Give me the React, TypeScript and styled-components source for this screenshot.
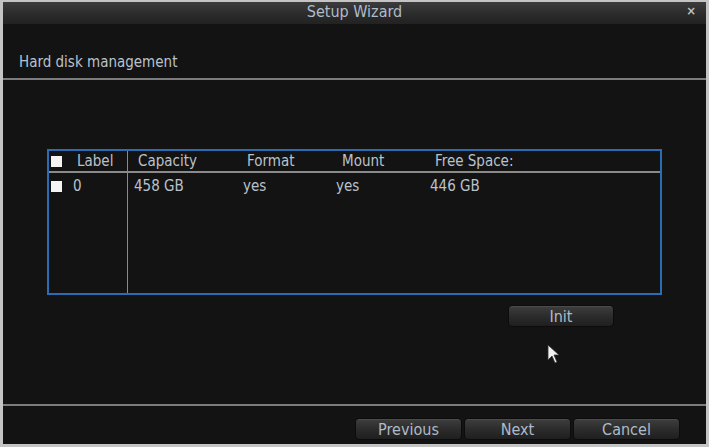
import styled, { createGlobalStyle } from "styled-components";

const GlobalStyle = createGlobalStyle`
  html, body {
    margin: 0;
    padding: 0;
    background: #131313;
  }
  body {
    font-family: "Liberation Sans Narrow", "DejaVu Sans Condensed", "Roboto", sans-serif;
  }
`;

const Window = styled.div`
  position: relative;
  width: 709px;
  height: 447px;
  box-sizing: border-box;
  border-style: solid;
  border-color: #c4c4c4;
  border-width: 2px 3px 3px 3px;
  background: #131313;
  display: flex;
  flex-direction: column;
  color: #b9c2cc;
  font-size: 15px;
`;

const TitleBar = styled.div`
  height: 22px;
  flex-shrink: 0;
  box-sizing: border-box;
  padding-bottom: 3px;
  background: linear-gradient(#3c3c3c, #2a2a2a 60%, #222);
  display: flex;
  align-items: center;
  justify-content: center;
  position: relative;
  font-size: 16px;
  color: #aebccb;
`;

const CloseX = styled.span`
  position: absolute;
  right: 10px;
  top: 1px;
  font-size: 13px;
  font-weight: bold;
  color: #bfbfbf;
`;

const SectionHead = styled.div`
  height: 54px;
  flex-shrink: 0;
  display: flex;
  align-items: flex-end;
  padding: 0 0 7px 16px;
  box-sizing: border-box;
`;

const Divider = styled.div`
  height: 2px;
  flex-shrink: 0;
  background: #7c7c7c;
`;

const Content = styled.div`
  flex: 1;
  display: flex;
  flex-direction: column;
  padding: 69px 44px 0 44px;
`;

const Table = styled.div`
  height: 146px;
  box-sizing: border-box;
  border: 2px solid #2b6cb3;
  display: grid;
  grid-template-columns: 79px 1fr;
  grid-template-rows: 22px 1fr;
`;

const HeadCell = styled.div<{ $left?: boolean }>`
  border-bottom: 2px solid #8a8a8a;
  border-right: ${(p) => (p.$left ? "1px solid #8a8a8a" : "none")};
  display: flex;
  align-items: center;
`;

const BodyCell = styled.div<{ $left?: boolean }>`
  border-right: ${(p) => (p.$left ? "1px solid #8a8a8a" : "none")};
  padding-top: 4px;
`;

const Row = styled.div`
  display: flex;
  align-items: center;
  height: 18px;
`;

const Check = styled.span`
  width: 11px;
  height: 11px;
  background: #f4f4f4;
  margin-left: 2px;
  flex-shrink: 0;
`;

const Col = styled.span<{ $w?: number; $ml?: number }>`
  width: ${(p) => (p.$w ? `${p.$w}px` : "auto")};
  margin-left: ${(p) => p.$ml ?? 0}px;
  flex-shrink: 0;
  white-space: nowrap;
`;

const InitRow = styled.div`
  display: flex;
  justify-content: flex-end;
  padding: 10px 48px 0 0;
`;

const Button = styled.button<{ $w?: number }>`
  width: ${(p) => p.$w ?? 107}px;
  height: 22px;
  padding: 0;
  border: 1px solid #0c0c0c;
  border-radius: 4px;
  background: linear-gradient(#3e3e3e, #2c2c2c 50%, #1f1f1f);
  box-shadow: inset 0 1px 0 rgba(255, 255, 255, 0.08);
  color: #aebbc8;
  font-family: inherit;
  font-size: 16px;
  display: flex;
  align-items: center;
  justify-content: center;
`;

const Footer = styled.div`
  height: 38px;
  flex-shrink: 0;
  display: flex;
  justify-content: flex-end;
  align-items: flex-start;
  gap: 2px;
  padding: 12px 26px 0 0;
  box-sizing: border-box;
`;

const Cursor = styled.svg`
  position: absolute;
  left: 544px;
  top: 342px;
`;

export default function App() {
  return (
    <>
      <GlobalStyle />
      <Window>
        <TitleBar>
          Setup Wizard
          <CloseX>×</CloseX>
        </TitleBar>
        <SectionHead>Hard disk management</SectionHead>
        <Divider />
        <Content>
          <Table>
            <HeadCell $left>
              <Check />
              <Col $ml={15}>Label</Col>
            </HeadCell>
            <HeadCell>
              <Col $w={109} $ml={10}>Capacity</Col>
              <Col $w={95}>Format</Col>
              <Col $w={93}>Mount</Col>
              <Col $w={100}>Free Space:</Col>
            </HeadCell>
            <BodyCell $left>
              <Row>
                <Check />
                <Col $ml={11}>0</Col>
              </Row>
            </BodyCell>
            <BodyCell>
              <Row>
                <Col $w={109} $ml={6}>458 GB</Col>
                <Col $w={93}>yes</Col>
                <Col $w={94}>yes</Col>
                <Col $w={100}>446 GB</Col>
              </Row>
            </BodyCell>
          </Table>
          <InitRow>
            <Button $w={106}>Init</Button>
          </InitRow>
        </Content>
        <Divider />
        <Footer>
          <Button>Previous</Button>
          <Button>Next</Button>
          <Button>Cancel</Button>
        </Footer>
        <Cursor width="14" height="20" viewBox="0 0 14 20">
          <path d="M1 1 L1 16 L5 12 L8 19 L10 18 L7 11 L12 11 Z" fill="#f2f2f2" stroke="#333" strokeWidth="0.8" />
        </Cursor>
      </Window>
    </>
  );
}
